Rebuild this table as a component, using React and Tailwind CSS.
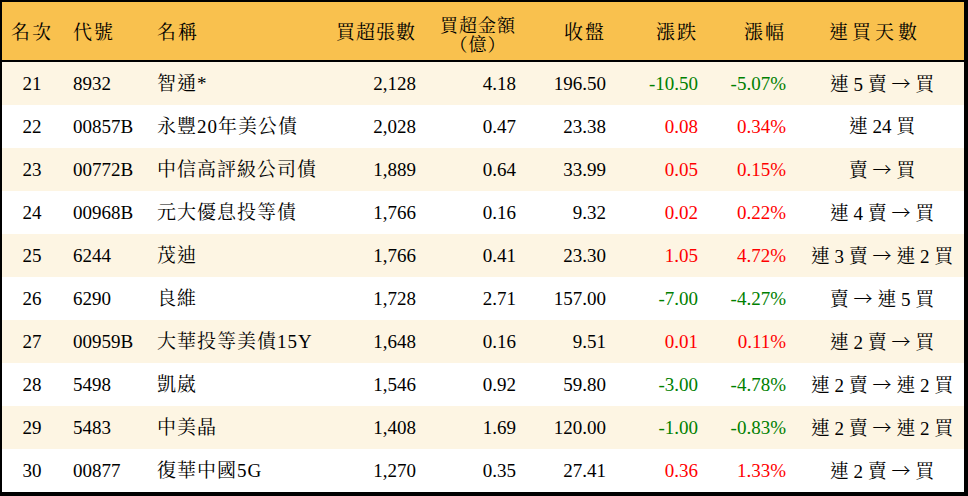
import React from 'react';

const rows = [
  ['21', '8932', '智通*', '2,128', '4.18', '196.50', '-10.50', '-5.07%', '連 5 賣 → 買'],
  ['22', '00857B', '永豐20年美公債', '2,028', '0.47', '23.38', '0.08', '0.34%', '連 24 買'],
  ['23', '00772B', '中信高評級公司債', '1,889', '0.64', '33.99', '0.05', '0.15%', '賣 → 買'],
  ['24', '00968B', '元大優息投等債', '1,766', '0.16', '9.32', '0.02', '0.22%', '連 4 賣 → 買'],
  ['25', '6244', '茂迪', '1,766', '0.41', '23.30', '1.05', '4.72%', '連 3 賣 → 連 2 買'],
  ['26', '6290', '良維', '1,728', '2.71', '157.00', '-7.00', '-4.27%', '賣 → 連 5 買'],
  ['27', '00959B', '大華投等美債15Y', '1,648', '0.16', '9.51', '0.01', '0.11%', '連 2 賣 → 買'],
  ['28', '5498', '凱崴', '1,546', '0.92', '59.80', '-3.00', '-4.78%', '連 2 賣 → 連 2 買'],
  ['29', '5483', '中美晶', '1,408', '1.69', '120.00', '-1.00', '-0.83%', '連 2 賣 → 連 2 買'],
  ['30', '00877', '復華中國5G', '1,270', '0.35', '27.41', '0.36', '1.33%', '連 2 賣 → 買'],
];

const font = {
  fontFamily: '"Liberation Serif", "AR PL UKai TW", "Noto Serif CJK TC", "Noto Sans CJK TC", serif',
};

const cjk = { fontFamily: '"Noto Sans CJK TC", sans-serif' };

// split the streak text so the arrow is drawn with the full-width CJK glyph
const Streak = ({ text }) => {
  const parts = text.split('→');
  if (parts.length === 1) return text;
  return (
    <>
      {parts[0]}
      <span className="font-light" style={cjk}>→</span>
      {parts[1]}
    </>
  );
};

const th = 'h-[60px] pt-[5px] border-b-2 border-black font-normal';

export default function App() {
  return (
    <div className="w-[968px] h-[496px] bg-white overflow-hidden" style={font}>
      <div className="border-l-2 border-t-2 border-r-4 border-b-4 border-black">
        <table className="w-full table-fixed border-separate border-spacing-0 text-[19px] text-black">
          <colgroup>
            <col className="w-[60px]" />
            <col className="w-[88px]" />
            <col className="w-[170px]" />
            <col className="w-[110px]" />
            <col className="w-[100px]" />
            <col className="w-[90px]" />
            <col className="w-[90px]" />
            <col className="w-[90px]" />
            <col />
          </colgroup>
          <thead>
            <tr className="bg-[#f9c14e]">
              <th className={`${th} text-center tracking-[2px]`}>名次</th>
              <th className={`${th} text-left pl-[11px] tracking-[2px]`}>代號</th>
              <th className={`${th} text-left pl-[7px] tracking-[2px]`}>名稱</th>
              <th className={`${th} text-right pr-[14px] tracking-[1px]`}>買超張數</th>
              <th className={`${th} text-right pr-[14px]`}>
                <div className="inline-flex flex-col items-center text-[18px] leading-[19px] tracking-[1px]">
                  <span>買超金額</span>
                  <span>（億）</span>
                </div>
              </th>
              <th className={`${th} text-right pr-[14px] tracking-[2px]`}>收盤</th>
              <th className={`${th} text-right pr-[12px] tracking-[2px]`}>漲跌</th>
              <th className={`${th} text-right pr-[14px] tracking-[2px]`}>漲幅</th>
              <th className={`${th} text-center pr-[14px] tracking-[4px]`}>連買天數</th>
            </tr>
          </thead>
          <tbody>
            {rows.map((r, i) => {
              const color = r[6].startsWith('-') ? 'text-[#008000]' : 'text-[#ff0000]';
              return (
                <tr key={r[0]} className={i % 2 === 0 ? 'h-[43px] bg-[#fdf5e3]' : 'h-[43px] bg-white'}>
                  <td className="pt-[2px] text-center">{r[0]}</td>
                  <td className="pt-[2px] text-left pl-[11px]">{r[1]}</td>
                  <td className="pt-[2px] text-left pl-[7px] whitespace-nowrap tracking-[1px]">{r[2]}</td>
                  <td className="pt-[2px] text-right pr-[14px]">{r[3]}</td>
                  <td className="pt-[2px] text-right pr-[14px]">{r[4]}</td>
                  <td className="pt-[2px] text-right pr-[14px]">{r[5]}</td>
                  <td className={`pt-[2px] text-right pr-[12px] ${color}`}>{r[6]}</td>
                  <td className={`pt-[2px] text-right pr-[14px] ${color}`}>{r[7]}</td>
                  <td className="pt-[2px] text-center whitespace-nowrap">
                    <Streak text={r[8]} />
                  </td>
                </tr>
              );
            })}
          </tbody>
        </table>
      </div>
    </div>
  );
}
